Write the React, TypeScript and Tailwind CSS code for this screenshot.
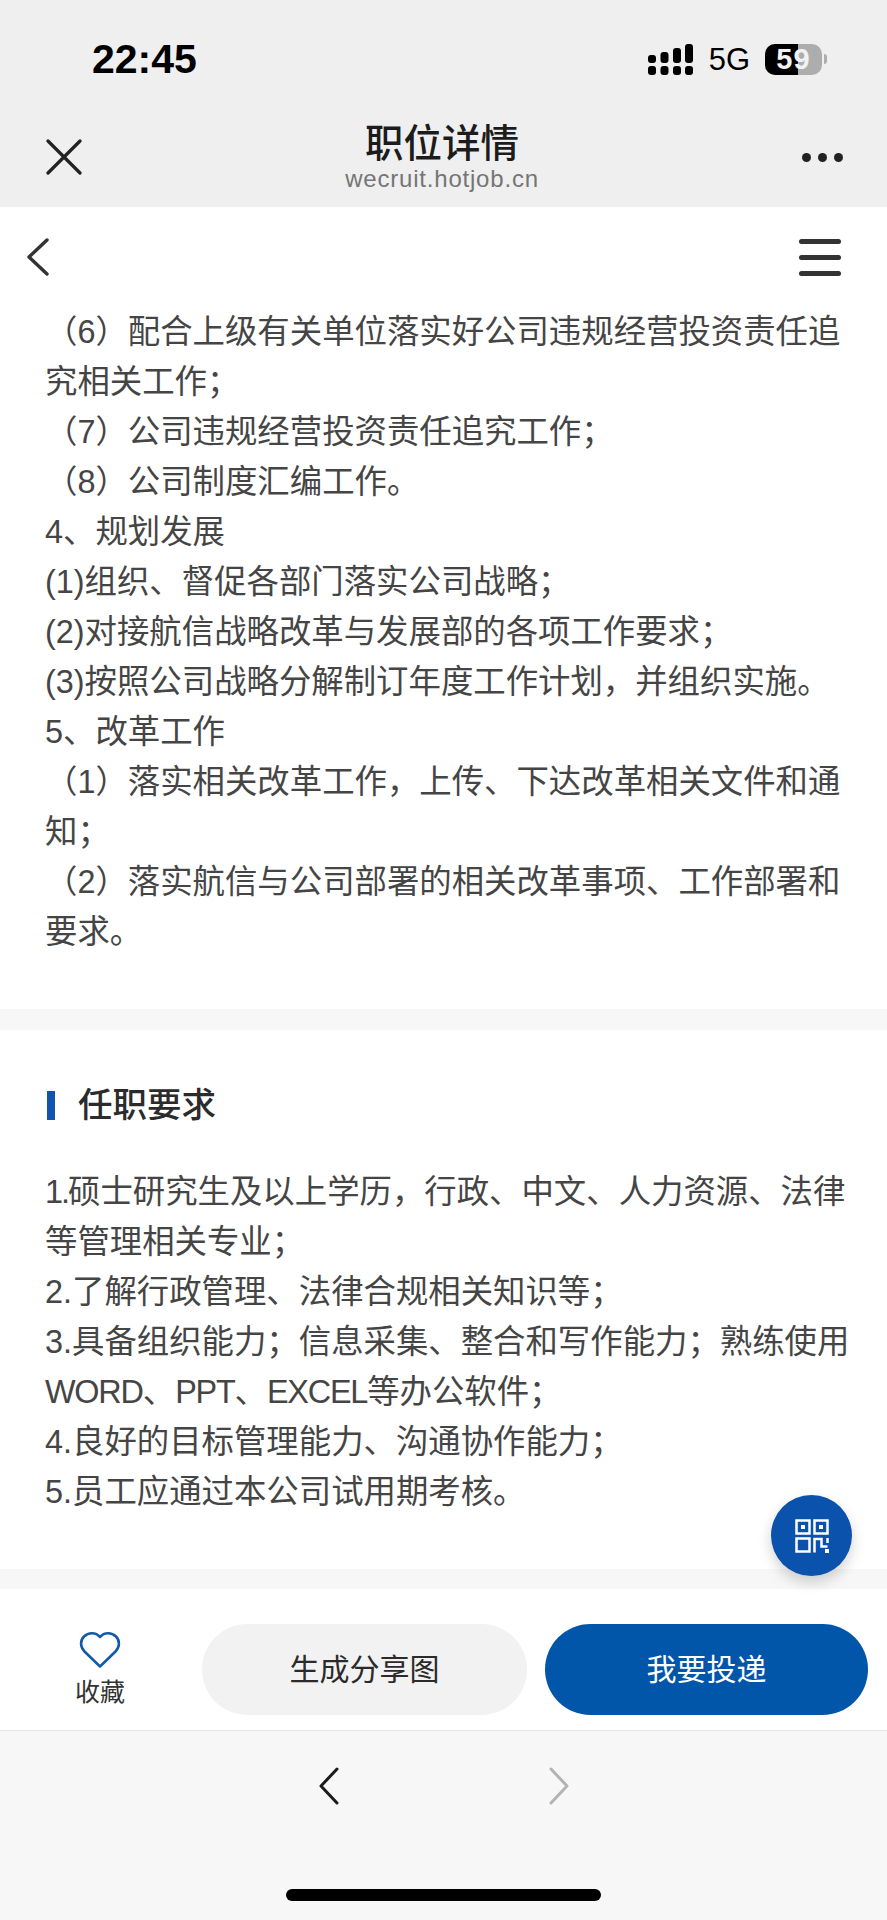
import type { ReactNode } from "react";

const duties: ReactNode[] = [
  "（6）配合上级有关单位落实好公司违规经营投资责任追",
  "究相关工作；",
  "（7）公司违规经营投资责任追究工作；",
  "（8）公司制度汇编工作。",
  "4、规划发展",
  "(1)组织、督促各部门落实公司战略；",
  "(2)对接航信战略改革与发展部的各项工作要求；",
  "(3)按照公司战略分解制订年度工作计划，并组织实施。",
  "5、改革工作",
  "（1）落实相关改革工作，上传、下达改革相关文件和通",
  "知；",
  "（2）落实航信与公司部署的相关改革事项、工作部署和",
  "要求。",
];

const requirements: ReactNode[] = [
  <>
    <span className="tracking-[-2px]">1.</span>硕士研究生及以上学历，行政、中文、人力资源、法律
  </>,
  "等管理相关专业；",
  "2.了解行政管理、法律合规相关知识等；",
  "3.具备组织能力；信息采集、整合和写作能力；熟练使用",
  <>
    <span className="tracking-[-1.2px]">WORD</span>、<span className="tracking-[-1.2px]">PPT</span>、
    <span className="tracking-[-1.2px]">EXCEL</span>等办公软件；
  </>,
  "4.良好的目标管理能力、沟通协作能力；",
  "5.员工应通过本公司试用期考核。",
];

function TextLines({ lines }: { lines: ReactNode[] }) {
  return (
    <div className="text-[32.4px] leading-[50px] text-[#454545]">
      {lines.map((line, i) => (
        <div key={i} className="whitespace-nowrap">
          {line}
        </div>
      ))}
    </div>
  );
}

function SignalIcon() {
  return (
    <svg width="45" height="31" viewBox="0 0 45 31" fill="#000" className="mr-[1px]">
      <rect x="0" y="11" width="8" height="8" rx="3" />
      <rect x="12.5" y="8" width="8" height="11" rx="3" />
      <rect x="25" y="4" width="8" height="15" rx="3" />
      <rect x="37" y="0" width="8" height="19" rx="3" />
      <rect x="0" y="22" width="8" height="9" rx="3" />
      <rect x="12.5" y="22" width="8" height="9" rx="3" />
      <rect x="25" y="22" width="8" height="9" rx="3" />
      <rect x="37" y="22" width="8" height="9" rx="3" />
    </svg>
  );
}

function Battery() {
  return (
    <div className="flex items-center gap-[2px]">
      <div className="relative h-[31px] w-[57px] overflow-hidden rounded-[10px] bg-[#adadad]">
        <div className="h-full w-[33px] bg-black" />
        <div className="absolute inset-0 flex items-center justify-center text-[29px] font-bold leading-none tracking-[1px] text-[#f2f2f2]">
          59
        </div>
      </div>
      <div className="h-[10px] w-[3px] rounded-r-full bg-[#adadad]" />
    </div>
  );
}

function QrIcon() {
  return (
    <svg width="34" height="34" viewBox="0 0 34 34" fill="none" stroke="#fff" strokeWidth="2.5">
      <rect x="1.5" y="1.5" width="13" height="13" />
      <rect x="19.5" y="1.5" width="13" height="13" />
      <rect x="1.5" y="19.5" width="13" height="13" />
      <rect x="6.5" y="6.500" width="3" height="3" fill="#fff" strokeWidth="1" />
      <rect x="24.5" y="6.500" width="3" height="3" fill="#fff" strokeWidth="1" />
      <path d="M19.5 33.500V20H26.500V27.500H32.500" />
      <path d="M32.500 19v5" />
      <rect x="30" y="30" width="4" height="4" fill="#fff" stroke="none" />
    </svg>
  );
}

export default function App() {
  return (
    <div
      className="relative flex h-[1920px] w-[887px] flex-col overflow-hidden bg-white"
      style={{ fontFamily: '"Liberation Sans", "Noto Sans CJK SC", sans-serif' }}
    >
      {/* wechat browser header */}
      <header className="h-[207px] shrink-0 bg-[#efefef]">
        <div className="flex h-[118px] items-center justify-between pl-[92px] pr-[60px]">
          <span className="text-[41px] font-bold leading-none text-black">22:45</span>
          <div className="flex items-center gap-[15px]">
            <SignalIcon />
            <span className="text-[31px] leading-none text-black">5G</span>
            <Battery />
          </div>
        </div>
        <div className="flex items-start justify-between pl-[46px] pr-[44px]">
          <svg width="36" height="36" viewBox="0 0 36 36" className="mt-[21px]" stroke="#222" strokeWidth="3.2" strokeLinecap="round">
            <path d="M2 2l32 32M34 2L2 34" />
          </svg>
          <div className="flex flex-col items-center">
            <div className="text-[38.5px] font-medium leading-[52px] text-[#1c1c1c]">职位详情</div>
            <div className="text-[24px] leading-[18px] tracking-[0.8px] text-[#757575]">wecruit.hotjob.cn</div>
          </div>
          <div className="mt-[35px] flex gap-[7px]">
            <span className="size-[9px] rounded-full bg-[#222]" />
            <span className="size-[9px] rounded-full bg-[#222]" />
            <span className="size-[9px] rounded-full bg-[#222]" />
          </div>
        </div>
      </header>

      {/* page nav */}
      <div className="flex h-[100px] shrink-0 items-center justify-between pl-[26px] pr-[46px]">
        <svg width="24" height="40" viewBox="0 0 24 40" fill="none" stroke="#333" strokeWidth="3.4" strokeLinecap="round" strokeLinejoin="round">
          <path d="M21 3L3 20l18 17" />
        </svg>
        <div className="flex w-[42px] flex-col gap-[11px]">
          <span className="h-[5px] rounded-full bg-[#333]" />
          <span className="h-[5px] rounded-full bg-[#333]" />
          <span className="h-[5px] rounded-full bg-[#333]" />
        </div>
      </div>

      <section className="h-[702px] shrink-0 px-[45px]">
        <TextLines lines={duties} />
      </section>

      <div className="h-[21px] shrink-0 bg-[#f7f7f7]" />

      <section className="h-[539px] shrink-0 px-[45px]">
        <div className="mt-[60px] flex items-center gap-[23px] pl-[2px]">
          <span className="h-[29px] w-[8px] bg-[#0f55ae]" />
          <h2 className="text-[34.5px] font-medium leading-[30px] text-[#2b2b2b]">任职要求</h2>
        </div>
        <div className="mt-[47px]">
          <TextLines lines={requirements} />
        </div>
      </section>

      <div className="h-[20px] shrink-0 bg-[#f7f7f7]" />

      {/* actions */}
      <div className="flex h-[142px] shrink-0 items-center gap-[18px] border-b border-[#e6e6e6] pb-[7px] pl-[50px] pr-[19px] pt-[26px]">
        <div className="flex w-[100px] flex-col items-center gap-[8px]">
          <svg width="42" height="38" viewBox="0 0 42 38" fill="none" stroke="#125ba8" strokeWidth="2.6" strokeLinejoin="round">
            <path d="M21 35.500L5.500 20.500C1 16 1 9.500 5 5.500C9 1.500 16.500 .5 21 6C25.500 .5 33 1.500 37 5.500C41 9.500 41 16 36.500 20.500Z" />
          </svg>
          <span className="text-[25px] leading-[30px] text-[#333]">收藏</span>
        </div>
        <button className="ml-[34px] h-[91px] w-[325px] rounded-full bg-[#f2f2f2] text-[30px] text-[#2b2b2b]">生成分享图</button>
        <button className="h-[91px] w-[323px] rounded-full bg-[#0256a9] text-[30px] text-white">我要投递</button>
      </div>

      {/* browser toolbar */}
      <footer className="flex flex-1 flex-col items-center bg-[#f7f7f7]">
        <div className="mt-[36px] flex gap-[210px]">
          <svg width="20" height="38" viewBox="0 0 20 38" fill="none" stroke="#1b1b1b" strokeWidth="3" strokeLinecap="round" strokeLinejoin="round">
            <path d="M18 2L2 19l16 17" />
          </svg>
          <svg width="20" height="38" viewBox="0 0 20 38" fill="none" stroke="#b3b3b3" strokeWidth="3" strokeLinecap="round" strokeLinejoin="round">
            <path d="M2 2l16 17L2 36" />
          </svg>
        </div>
        <div className="mt-[84px] h-[12px] w-[315px] rounded-full bg-black" />
      </footer>

      {/* floating qr button */}
      <div className="absolute left-[771px] top-[1495px] flex size-[81px] items-center justify-center rounded-full bg-[#0a52ab] shadow-[0_6px_14px_rgba(0,0,0,0.18)]">
        <QrIcon />
      </div>
    </div>
  );
}
